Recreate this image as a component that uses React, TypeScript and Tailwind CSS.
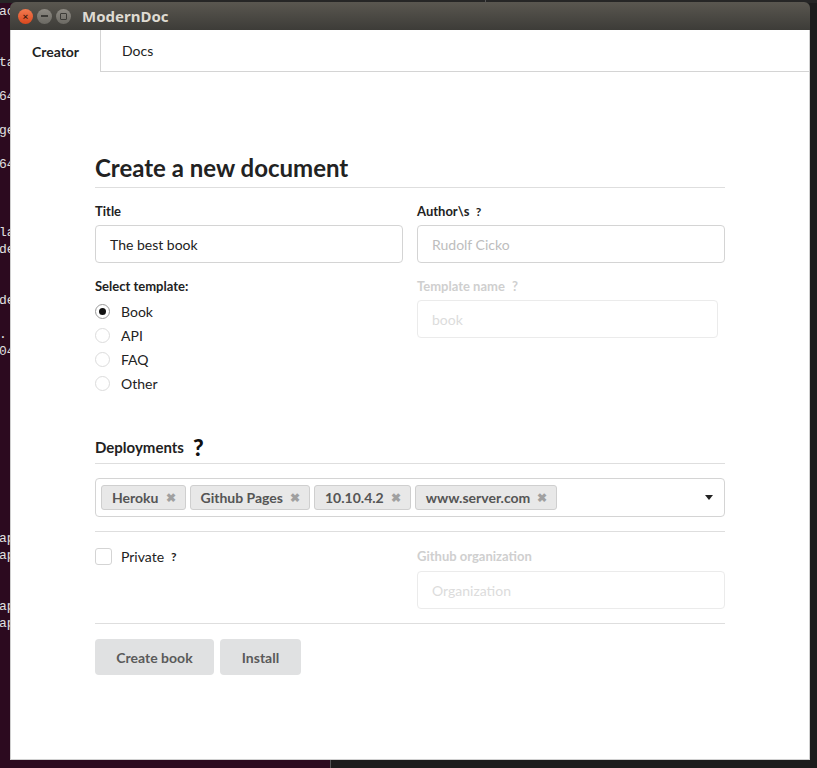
import React from "react";

const termLines: Record<number, string> = {
  0: "ac",
  3: "ta",
  5: "64",
  7: "ge",
  9: "64",
  13: "la",
  14: "de",
  17: "de",
  19: ".",
  20: "04",
  31: "ap",
  32: "ap",
  35: "ap",
  36: "ap",
};

function Radio({ label, checked }: { label: string; checked?: boolean }) {
  return (
    <div className="flex items-center h-[24px]">
      <span
        className={
          checked
            ? "w-[15px] h-[15px] rounded-full border border-[#9a9a9a] flex items-center justify-center"
            : "w-[15px] h-[15px] rounded-full border border-[#dcdcdc]"
        }
      >
        {checked && <span className="w-[7px] h-[7px] rounded-full bg-[#111]" />}
      </span>
      <span className="ml-[11px] text-[14px] text-[#222]">{label}</span>
    </div>
  );
}

function Tag({ label }: { label: string }) {
  return (
    <span className="h-[25px] flex items-center pl-[10px] pr-[9px] bg-[#e8e8e8] border border-[#cfcfcf] rounded-[3px] text-[14px] font-bold text-[#555]">
      {label}
      <span className="ml-[7px] text-[12px] text-[#a0a0a0]">✖</span>
    </span>
  );
}

export default function App() {
  return (
    <div
      className="relative w-[817px] h-[768px] overflow-hidden bg-[#1d1d1d]"
      style={{ fontFamily: "Lato, 'Open Sans', sans-serif" }}
    >
      {/* terminal behind */}
      <div className="absolute left-0 top-[3px] w-[330px] h-[765px] bg-[#2c0a1f]">
        <div className="text-[13px] leading-[17px] text-[#e0e0e0] -ml-[1px]" style={{ fontFamily: "'Liberation Mono', monospace" }}>
          {Array.from({ length: 40 }).map((_, i) => (
            <div key={i} className="h-[17px] whitespace-pre">{termLines[i] ?? " "}</div>
          ))}
        </div>
      </div>
      <div className="absolute left-0 top-0 w-[817px] h-[3px] bg-[#262626]" />
      <div className="absolute left-[485px] top-0 w-[1px] h-[3px] bg-[#555]" />

      {/* window */}
      <div className="absolute left-[10px] top-[2px] w-[800px] h-[758px] flex flex-col">
        <div className="h-[28px] rounded-t-[6px] bg-gradient-to-b from-[#5a5750] to-[#3d3c38] flex items-center pl-[8px]">
          <span className="w-[15px] h-[15px] rounded-full bg-gradient-to-b from-[#f37a4f] to-[#d9471c] flex items-center justify-center text-[#3a1a0e] text-[10px] leading-none font-bold">
            ×
          </span>
          <span className="ml-[4px] w-[15px] h-[15px] rounded-full bg-gradient-to-b from-[#8e8b84] to-[#6b6963] flex items-center justify-center">
            <span className="w-[7px] h-[2px] bg-[#3c3b37]" />
          </span>
          <span className="ml-[4px] w-[15px] h-[15px] rounded-full bg-gradient-to-b from-[#8e8b84] to-[#6b6963] flex items-center justify-center">
            <span className="w-[7px] h-[7px] border border-[#3c3b37] rounded-[1px]" />
          </span>
          <span className="ml-[11px] text-[15px] font-bold text-[#dfdbd2]" style={{ fontFamily: "'Noto Sans', Lato, sans-serif" }}>
            ModernDoc
          </span>
        </div>
        <div className="flex-1 bg-white border-x border-b border-[#d0d0d0] flex flex-col">
          {/* tabs */}
          <div className="flex h-[42px]">
            <div className="w-[90px] flex items-center justify-center border-r border-[#d4d4d4] text-[14px] font-bold text-[#222]">
              Creator
            </div>
            <div className="flex-1 border-b border-[#d4d4d4] flex items-center pl-[21px] text-[14px] text-[#222]">
              Docs
            </div>
          </div>

          {/* form */}
          <div className="w-[630px] ml-[84px] flex flex-col">
            <div className="mt-[80px] h-[32px] leading-[32px] text-[24px] font-bold text-[#222]">
              Create a new document
            </div>
            <div className="mt-[3px] h-[1px] bg-[#dedede]" />

            <div className="mt-[13px] grid grid-cols-2 gap-x-[14px]">
              <div className="flex flex-col">
                <div className="h-[20px] leading-[20px] text-[13px] font-bold text-[#222]">Title</div>
                <div className="mt-[4px] h-[38px] border border-[#d4d4d4] rounded-[4px] flex items-center pl-[14px] text-[14px] text-[#222]">
                  The best book
                </div>
              </div>
              <div className="flex flex-col">
                <div className="h-[20px] leading-[20px] text-[13px] font-bold text-[#222]">
                  Author\s <span className="ml-[3px] text-[12px]">?</span>
                </div>
                <div className="mt-[4px] h-[38px] border border-[#d4d4d4] rounded-[4px] flex items-center pl-[14px] text-[14px] text-[#bdbdbd]">
                  Rudolf Cicko
                </div>
              </div>
            </div>

            <div className="mt-[13px] grid grid-cols-2 gap-x-[14px]">
              <div className="flex flex-col">
                <div className="h-[20px] leading-[20px] text-[13px] font-bold text-[#222]">Select template:</div>
                <div className="mt-[3px] flex flex-col">
                  <Radio label="Book" checked />
                  <Radio label="API" />
                  <Radio label="FAQ" />
                  <Radio label="Other" />
                </div>
              </div>
              <div className="flex flex-col">
                <div className="h-[20px] leading-[20px] text-[13px] font-bold text-[#cfcfcf]">
                  Template name <span className="ml-[4px]">?</span>
                </div>
                <div className="mt-[4px] w-[301px] h-[38px] border border-[#ebebeb] rounded-[4px] flex items-center pl-[14px] text-[14px] text-[#dcdcdc]">
                  book
                </div>
              </div>
            </div>

            <div className="mt-[40px] h-[24px] flex items-center text-[15px] font-bold text-[#222]">
              Deployments
              <span className="ml-[9px] text-[23px] font-black text-[#111] leading-none">?</span>
            </div>
            <div className="mt-[4px] h-[1px] bg-[#dedede]" />

            <div className="mt-[14px] h-[39px] border border-[#d4d4d4] rounded-[4px] flex items-center pl-[5px] pr-[11px]">
              <div className="flex gap-[4px] flex-1">
                <Tag label="Heroku" />
                <Tag label="Github Pages" />
                <Tag label="10.10.4.2" />
                <Tag label="www.server.com" />
              </div>
              <span className="w-0 h-0 border-l-[4px] border-r-[4px] border-t-[5px] border-l-transparent border-r-transparent border-t-[#222]" />
            </div>
            <div className="mt-[14px] h-[1px] bg-[#dedede]" />

            <div className="mt-[16px] grid grid-cols-2 gap-x-[14px]">
              <div className="flex items-start">
                <div className="flex items-center h-[17px]">
                  <span className="w-[17px] h-[17px] border border-[#d4d4d4] rounded-[3px]" />
                  <span className="ml-[9px] text-[14px] text-[#222]">Private</span>
                  <span className="ml-[7px] text-[12px] font-bold text-[#222]">?</span>
                </div>
              </div>
              <div className="flex flex-col">
                <div className="h-[17px] leading-[17px] text-[13px] font-bold text-[#cfcfcf]">Github organization</div>
                <div className="mt-[6px] h-[38px] border border-[#ebebeb] rounded-[4px] flex items-center pl-[14px] text-[14px] text-[#dcdcdc]">
                  Organization
                </div>
              </div>
            </div>
            <div className="mt-[14px] h-[1px] bg-[#dedede]" />

            <div className="mt-[15px] flex gap-[6px]">
              <div className="w-[119px] h-[36px] rounded-[4px] bg-[#e0e1e2] flex items-center justify-center text-[14px] font-bold text-[#5a5a5a]">
                Create book
              </div>
              <div className="w-[81px] h-[36px] rounded-[4px] bg-[#e0e1e2] flex items-center justify-center text-[14px] font-bold text-[#5a5a5a]">
                Install
              </div>
            </div>
          </div>
        </div>
      </div>
      <div className="absolute left-[330px] top-[760px] w-[1px] h-[8px] bg-[#555]" />
    </div>
  );
}
